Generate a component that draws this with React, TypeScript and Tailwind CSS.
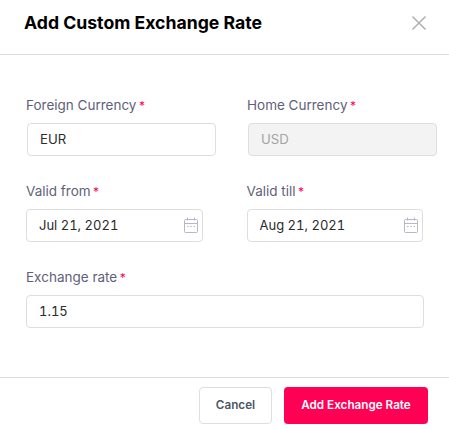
const Label = ({ text }: { text: string }) => (
  <div className="text-[13.5px] leading-[17px] text-[#5f5f7a]">
    {text}
    <span className="text-[#ff0055] text-[12px] ml-[2.5px]">*</span>
  </div>
);

const CalendarIcon = () => (
  <svg width="16" height="17" viewBox="0 0 16 17" fill="none" stroke="#b4b8c8" strokeWidth="1" className="shrink-0">
    <rect x="1.5" y="2.5" width="13" height="13" rx="1" />
    <path d="M1.5 6.5h13M4.5 0.5v3M11.5 0.5v3" />
    <path d="M4 9.5h1.5M7.2 9.5h1.5M10.5 9.5h1.5" />
  </svg>
);

const DateField = ({ label, value }: { label: string; value: string }) => (
  <div className="w-[177px]">
    <Label text={label} />
    <div className="mt-[9px] h-[33px] flex items-center justify-between pl-[12px] pr-[3px] bg-white border border-[#dedede] rounded-[4px] text-[13px] text-[#2b2b2b] tabular-nums">
      <span className="pt-px">{value}</span>
      <CalendarIcon />
    </div>
  </div>
);

const App = () => {
  return (
    <div className="w-[449px] h-[429px] bg-white overflow-hidden font-['Inter',sans-serif]">
      <div className="h-[55px] border-b border-[#dedede] flex items-center justify-between pl-[24px] pr-[22px]">
        <h2 className="text-[17.65px] font-bold text-black leading-none -mt-[8px]">Add Custom Exchange Rate</h2>
        <svg width="16" height="16" viewBox="0 0 16 16" stroke="#b0b0b0" strokeWidth="1.5" fill="none" className="-mt-[8px]">
          <path d="M1.5 1.5l13 13M14.5 1.5l-13 13" />
        </svg>
      </div>

      <div className="h-[323px] px-[26px] pt-[42px] border-b border-[#dedede]">
        <div className="flex gap-[31px]">
          <div className="w-[190px]">
            <Label text="Foreign Currency" />
            <div className="mt-[9px] ml-px h-[33px] w-[189px] flex items-center pl-[12px] pt-px bg-white border border-[#dedede] rounded-[4px] text-[13.2px] text-[#2b2b2b]">
              EUR
            </div>
          </div>
          <div className="w-[190px]">
            <Label text="Home Currency" />
            <div className="mt-[9px] ml-px h-[33px] w-[189px] flex items-center pl-[12px] pt-px bg-[#f3f3f3] border border-[#dedede] rounded-[4px] text-[13.2px] text-[#a3a3a3]">
              USD
            </div>
          </div>
        </div>

        <div className="flex gap-[44px] mt-[27px]">
          <DateField label="Valid from" value="Jul 21, 2021" />
          <DateField label="Valid till" value="Aug 21, 2021" />
        </div>

        <div className="mt-[27px] w-[398px]">
          <Label text="Exchange rate" />
          <div className="mt-[9px] h-[33px] flex items-center pl-[12px] pt-px bg-white border border-[#dedede] rounded-[4px] text-[13px] text-[#2b2b2b] tabular-nums">
            1.15
          </div>
        </div>
      </div>

      <div className="flex justify-end gap-[12px] pt-[9px] pr-[21px]">
        <button className="w-[73px] h-[37px] border border-[#dedede] rounded-[4px] bg-white text-[11.7px] font-semibold text-[#4b5563]">
          Cancel
        </button>
        <button className="w-[144px] h-[37px] rounded-[4px] bg-[#ff0055] text-[11.7px] font-semibold text-white">
          Add Exchange Rate
        </button>
      </div>
    </div>
  );
};

export default App;
